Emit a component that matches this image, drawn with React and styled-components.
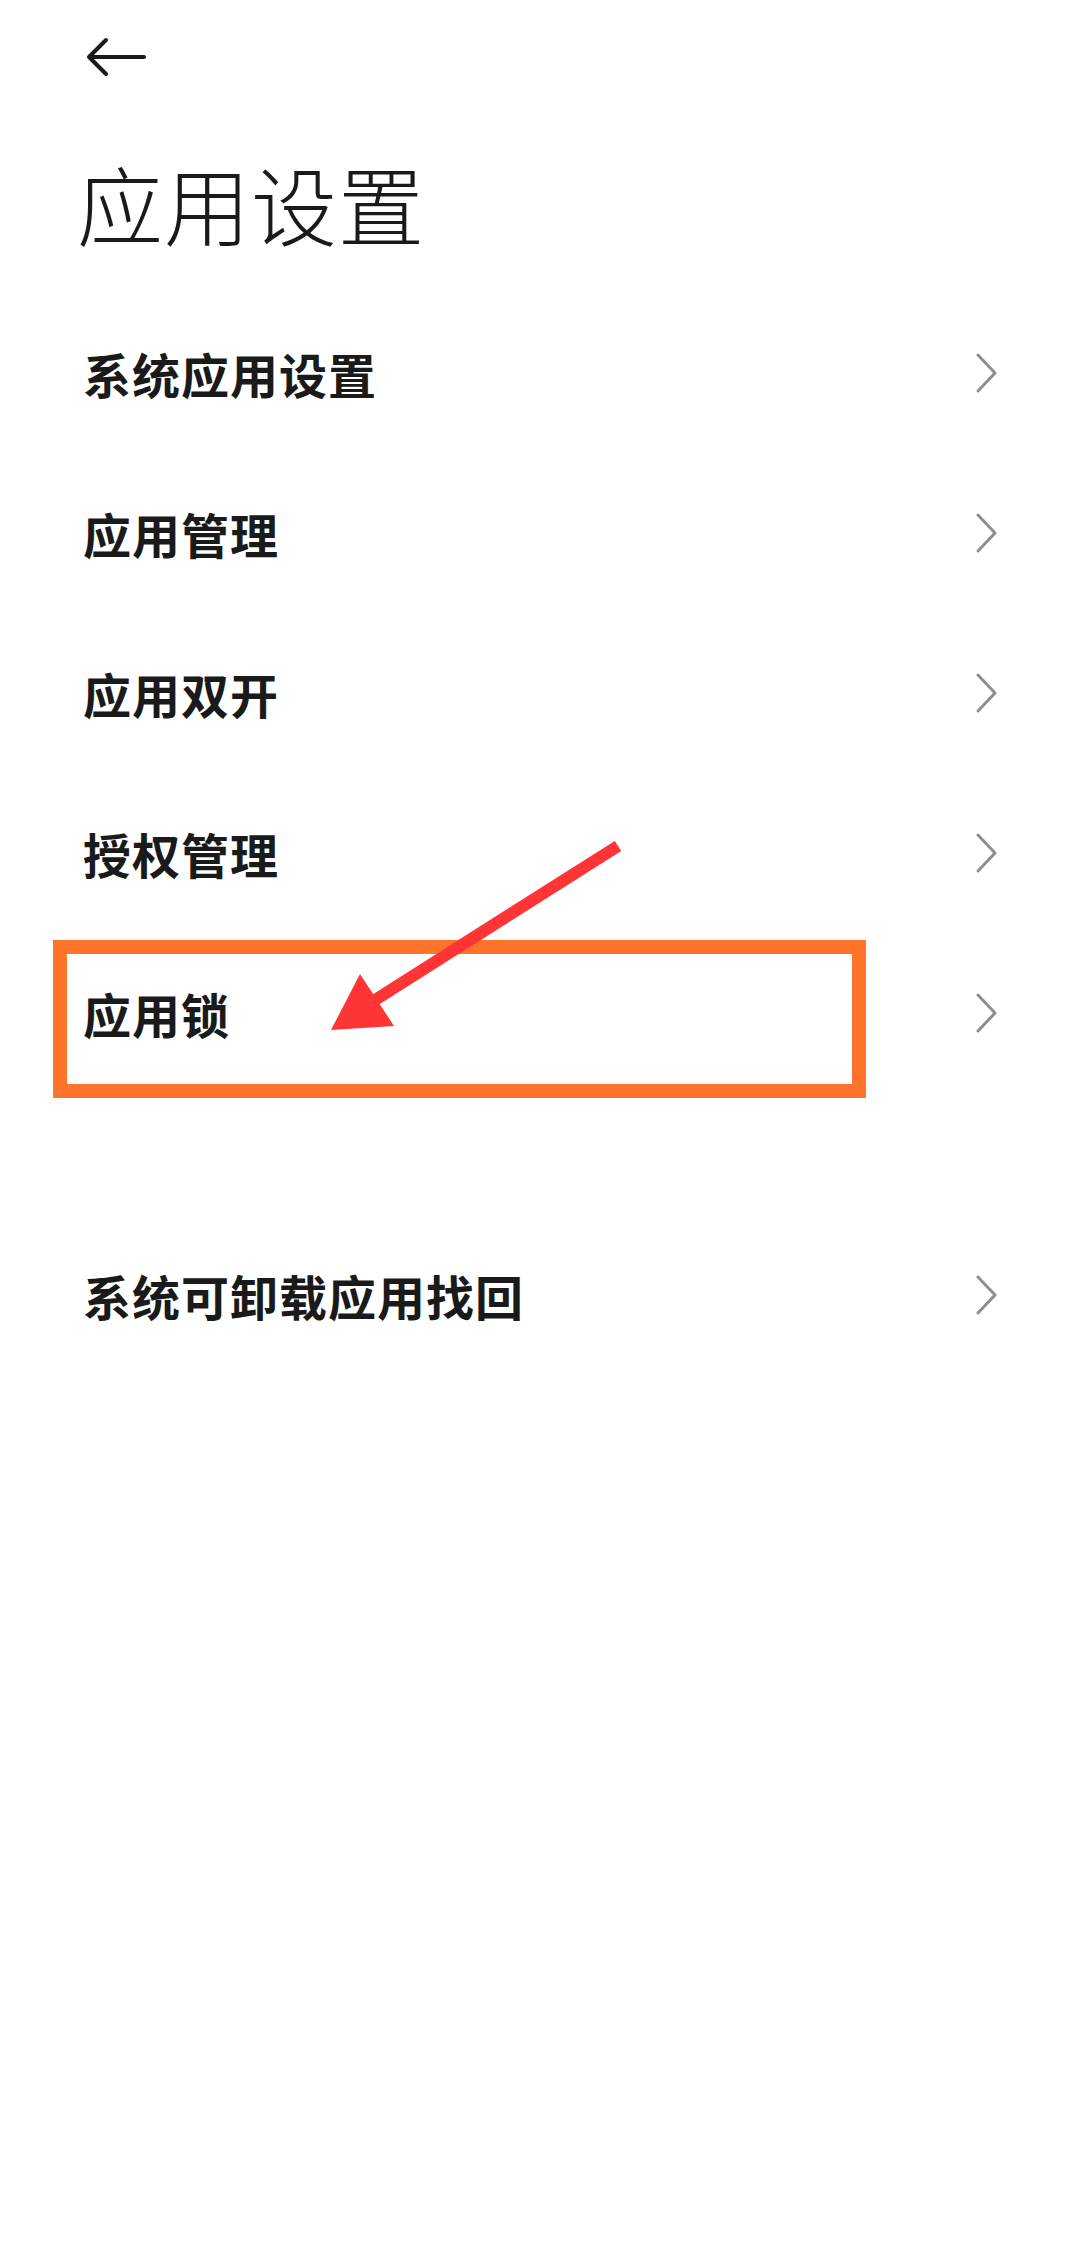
import React from 'react'
import styled, { createGlobalStyle } from 'styled-components'

const GlobalStyle = createGlobalStyle`
  html, body {
    margin: 0;
    padding: 0;
    background: #ffffff;
  }
  body {
    font-family: "Noto Sans CJK SC", "Noto Sans", sans-serif;
    color: #1a1a1a;
  }
`

const Page = styled.div`
  width: 1080px;
  min-height: 2241px;
  background: #ffffff;
  display: flex;
  flex-direction: column;
`

const TopBar = styled.div`
  height: 114px;
  display: flex;
  align-items: center;
  padding-left: 86px;
`

const BackButton = styled.button`
  border: none;
  background: none;
  padding: 0;
  width: 62px;
  height: 40px;
  display: flex;
  align-items: center;
`

const Title = styled.h1`
  margin: 46px 0 47px 77px;
  font-size: 86px;
  line-height: 86px;
  font-weight: 300;
  letter-spacing: 1px;
  color: #1a1a1a;
`

const List = styled.div`
  position: relative;
  display: flex;
  flex-direction: column;
`

const Row = styled.div`
  position: relative;
  height: 160px;
  display: flex;
  align-items: center;
  justify-content: space-between;
  padding: 0 82px 0 83px;
  margin-top: ${props => props.$gap ? '122px' : '0'};
`

const Label = styled.span`
  font-size: 48px;
  font-weight: 700;
  line-height: 1;
  letter-spacing: 1px;
  color: #1a1a1a;
`

const Highlight = styled.div`
  position: absolute;
  left: 53px;
  top: 7px;
  width: 813px;
  height: 158px;
  box-sizing: border-box;
  border: 14px solid #ff742a;
  pointer-events: none;
`

const Pointer = styled.svg`
  position: absolute;
  left: 0;
  top: 0;
  pointer-events: none;
`

const BackIcon = () => (
  <svg width="62" height="40" viewBox="0 0 62 40" fill="none">
    <path d="M3 20 H58 M3 20 L20 3 M3 20 L20 37" stroke="#1a1a1a" strokeWidth="4" strokeLinecap="round" strokeLinejoin="round" />
  </svg>
)

const Chevron = () => (
  <svg width="22" height="40" viewBox="0 0 22 40" fill="none">
    <path d="M2 2 L19 20 L2 38" stroke="#8e8e8e" strokeWidth="3" strokeLinecap="round" strokeLinejoin="round" />
  </svg>
)

const items = [
  { label: '系统应用设置' },
  { label: '应用管理' },
  { label: '应用双开' },
  { label: '授权管理' },
  { label: '应用锁', marked: true },
  { label: '系统可卸载应用找回', gap: true },
]

const App = () => {
  return (
    <Page>
      <GlobalStyle />
      <TopBar>
        <BackButton>
          <BackIcon />
        </BackButton>
      </TopBar>
      <Title>应用设置</Title>
      <List>
        {items.map(item => (
          <Row key={item.label} $gap={item.gap}>
            <Label>{item.label}</Label>
            <Chevron />
            {item.marked && <Highlight />}
          </Row>
        ))}
        {/* red annotation arrow, coordinates relative to the list */}
        <Pointer width="1080" height="800" viewBox="0 0 1080 800">
          <path d="M618 553 L375 707" stroke="#ff3535" strokeWidth="12" strokeLinecap="butt" />
          <polygon points="331,737 360,681 394,733" fill="#ff3535" />
        </Pointer>
      </List>
    </Page>
  )
}

export default App
